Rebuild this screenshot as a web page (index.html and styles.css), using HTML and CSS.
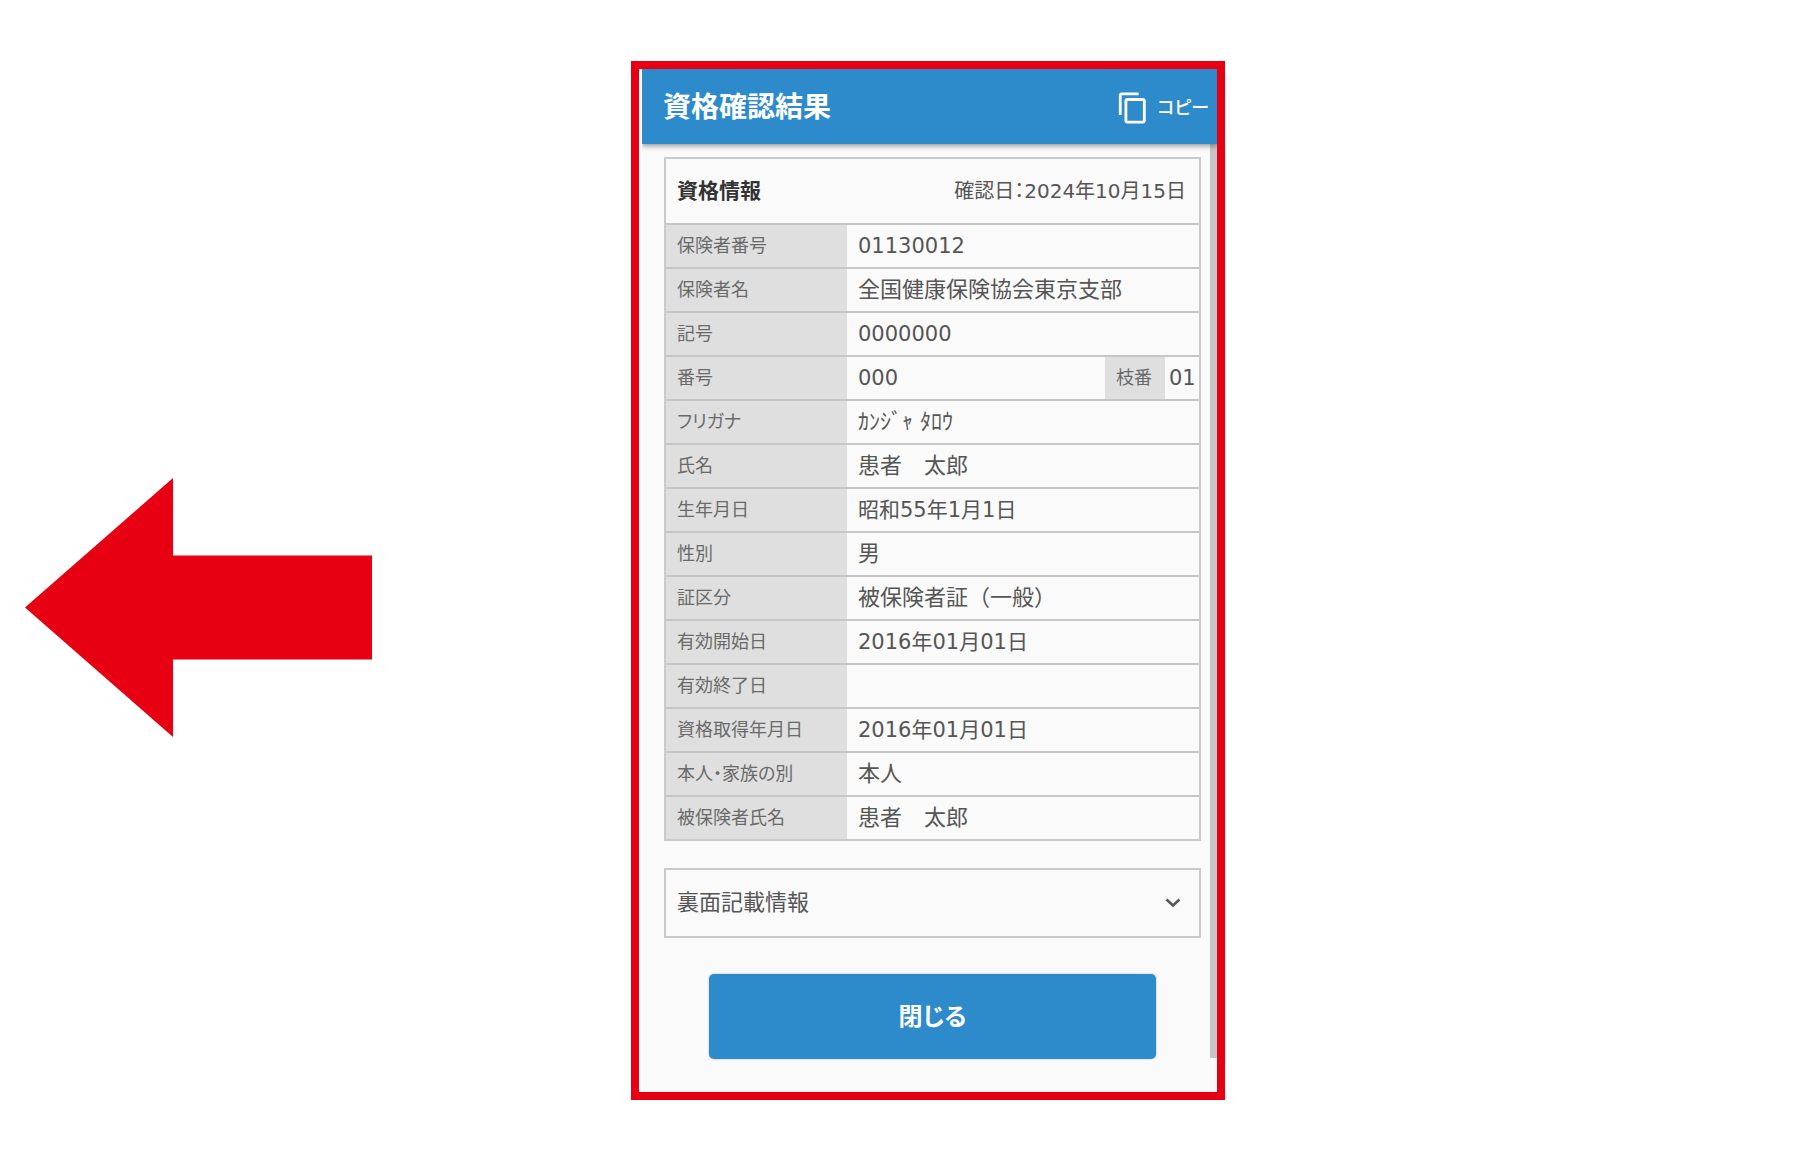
FILE: index.html
```html
<!DOCTYPE html>
<html lang="ja">
<head>
<meta charset="utf-8">
<meta name="viewport" content="width=device-width, initial-scale=1">
<title>資格確認結果</title>
<link rel="stylesheet" href="styles.css">
</head>
<body>
<main class="stage">
  <svg class="arrow" viewBox="0 0 347 259" aria-hidden="true"><path d="M0 129.5 148 0V77.500H347V181.500H148V259Z" fill="#e60012"/></svg>

  <section class="phone">
    <div class="screen">
      <header class="appbar">
        <h1 class="appbar-title">資格確認結果</h1>
        <button class="copy" type="button">
          <svg class="copy-icon" viewBox="0 0 24 24" aria-hidden="true"><path fill="currentColor" d="M16 1H4c-1.100 0-2 .9-2 2v14h2V3h12V1zm3 4H8c-1.100 0-2 .9-2 2v14c0 1.100.9 2 2 2h11c1.100 0 2-.9 2-2V7c0-1.100-.9-2-2-2zm0 16H8V7h11v14z"/></svg>
          <span>コピー</span>
        </button>
      </header>

      <div class="viewport">
        <div class="content">
          <section class="card">
            <div class="card-head">
              <h2 class="card-title">資格情報</h2>
              <p class="card-date">確認日：2024年10月15日</p>
            </div>
            <table class="info">
              <colgroup><col class="col-label"><col><col class="col-branch"><col class="col-branch-no"></colgroup>
              <tbody>
                <tr><th scope="row">保険者番号</th><td class="num" colspan="3">01130012</td></tr>
                <tr><th scope="row">保険者名</th><td colspan="3">全国健康保険協会東京支部</td></tr>
                <tr><th scope="row">記号</th><td class="num" colspan="3">0000000</td></tr>
                <tr><th scope="row">番号</th><td class="num">000</td><th class="branch" scope="row">枝番</th><td class="num branch-no">01</td></tr>
                <tr><th scope="row">フリガナ</th><td colspan="3">ｶﾝｼﾞｬ ﾀﾛｳ</td></tr>
                <tr><th scope="row">氏名</th><td colspan="3">患者　太郎</td></tr>
                <tr><th scope="row">生年月日</th><td class="num" colspan="3">昭和55年1月1日</td></tr>
                <tr><th scope="row">性別</th><td colspan="3">男</td></tr>
                <tr><th scope="row">証区分</th><td colspan="3">被保険者証（一般）</td></tr>
                <tr><th scope="row">有効開始日</th><td class="num" colspan="3">2016年01月01日</td></tr>
                <tr><th scope="row">有効終了日</th><td colspan="3"></td></tr>
                <tr><th scope="row">資格取得年月日</th><td class="num" colspan="3">2016年01月01日</td></tr>
                <tr><th scope="row">本人・家族の別</th><td colspan="3">本人</td></tr>
                <tr><th scope="row">被保険者氏名</th><td colspan="3">患者　太郎</td></tr>
              </tbody>
            </table>
          </section>

          <button class="accordion" type="button" aria-expanded="false">
            <span>裏面記載情報</span>
            <svg class="chevron" viewBox="0 0 16 10" aria-hidden="true"><path d="M1.500 1.500 8 7.500 14.500 1.500" fill="none" stroke="currentColor" stroke-width="2.500"/></svg>
          </button>

          <button class="close" type="button">閉じる</button>
        </div>
        <div class="scrollbar" aria-hidden="true"></div>
      </div>
    </div>
  </section>
</main>
</body>
</html>
```
FILE: styles.css
```css
*, *::before, *::after { box-sizing: border-box; }

body {
  margin: 0;
  background: #fff;
  color: #555;
  font-family: "DejaVu Sans", "Noto Sans CJK JP", sans-serif;
  font-feature-settings: "palt";
}

h1, h2, p { margin: 0; }

button {
  border: 0;
  padding: 0;
  font: inherit;
  font-feature-settings: inherit;
  cursor: pointer;
}

.stage {
  display: grid;
  grid-template-columns: minmax(0, 606fr) minmax(0, 594fr) minmax(0, 594fr);
  align-items: center;
  padding: 61px 0 56px 25px;
}

.arrow {
  width: 347px;
  max-width: 100%;
  margin-top: 53px;
}

.phone {
  border: 8px solid #e60012;
  padding-left: 3px;
}

.screen { background: #fafafa; }

.appbar {
  position: relative;
  display: flex;
  align-items: center;
  justify-content: space-between;
  height: 75px;
  padding: 2px 8px 0 21px;
  background: #2d8bcb;
  color: #fff;
  box-shadow: 0 2px 5px rgba(0, 0, 0, 0.4);
  clip-path: inset(0 0 -8px 0);
}

.appbar-title {
  font-size: 28px;
  line-height: 40px;
  font-weight: 700;
}

.copy {
  display: flex;
  align-items: center;
  gap: 7px;
  background: none;
  color: inherit;
  font-size: 18px;
  line-height: 28px;
  font-weight: 500;
}

.copy-icon {
  width: 34px;
  height: 34px;
}

.viewport { display: flex; }

.content {
  flex: 1;
  min-width: 0;
  display: flex;
  flex-direction: column;
  padding: 13px 9px 33px 22px;
}

.scrollbar {
  width: 7px;
  margin-bottom: 34px;
  background: #c6c6c6;
}

.card, .accordion { border: 2px solid #cacaca; }

.card-head {
  display: flex;
  align-items: center;
  justify-content: space-between;
  height: 64px;
  padding: 0 13px 0 11px;
}

.card-title {
  color: #333;
  font-size: 21px;
  line-height: 32px;
  font-weight: 700;
}

.card-date {
  font-size: 20px;
  line-height: 32px;
}

.info {
  width: 100%;
  table-layout: fixed;
  border-collapse: separate;
  border-spacing: 0;
}

.col-label { width: 181px; }
.col-branch { width: 60px; }
.col-branch-no { width: 34px; }

.info th, .info td {
  height: 44px;
  padding: 0 0 0 11px;
  border-top: 2px solid #c6c6c6;
  text-align: left;
  white-space: nowrap;
  line-height: 32px;
}

.info th {
  background: #dfdfdf;
  color: #6a6a6a;
  font-size: 18px;
  font-weight: 400;
}

.info td {
  font-size: 22px;
  font-feature-settings: normal;
}

.info .num { font-size: 21px; }
.info .branch-no { padding-left: 4px; }

.accordion {
  display: flex;
  align-items: center;
  justify-content: space-between;
  height: 70px;
  margin-top: 27px;
  padding: 0 18px 0 11px;
  background: #fafafa;
  color: #555;
  font-size: 22px;
  line-height: 32px;
}

.chevron {
  width: 16px;
  height: 10px;
}

.close {
  height: 85px;
  margin: 36px 45px 0;
  border-radius: 5px;
  background: #2d8bcb;
  color: #fff;
  font-size: 24px;
  line-height: 36px;
  font-weight: 700;
  box-shadow: 0 0 2px rgba(0, 0, 0, 0.3);
}
```
